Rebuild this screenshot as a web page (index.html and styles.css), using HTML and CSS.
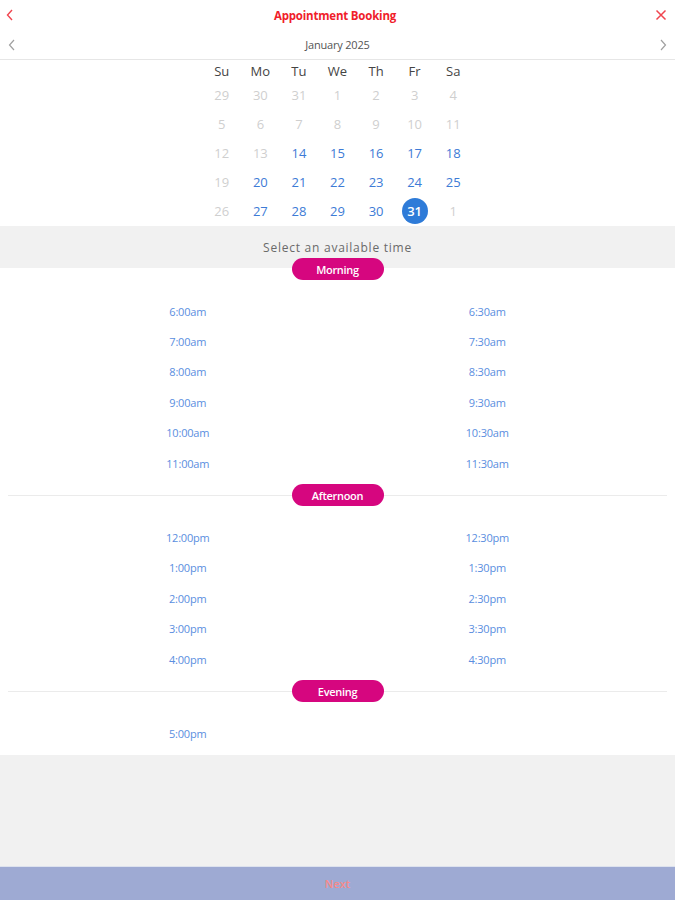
FILE: index.html
```html
<!DOCTYPE html>
<html>
<head>
<meta charset="utf-8">
<link rel="stylesheet" href="styles.css">
</head>
<body>
<div class="app">
  <header class="topbar">
    <svg class="icon back" width="10" height="14" viewBox="0 0 10 14"><path d="M7 2 L2.5 7 L7 12" fill="none" stroke="#f0454f" stroke-width="1.4"/></svg>
    <div class="title">Appointment Booking</div>
    <svg class="icon close" width="12" height="12" viewBox="0 0 12 12"><path d="M1.5 1.5 L10.5 10.5 M10.5 1.5 L1.5 10.5" fill="none" stroke="#f0454f" stroke-width="1.5"/></svg>
  </header>
  <div class="monthbar">
    <svg class="icon" width="10" height="14" viewBox="0 0 10 14"><path d="M7 2 L2.5 7 L7 12" fill="none" stroke="#a0a0a0" stroke-width="1.2"/></svg>
    <div class="month">January 2025</div>
    <svg class="icon" width="10" height="14" viewBox="0 0 10 14"><path d="M3 2 L7.5 7 L3 12" fill="none" stroke="#a0a0a0" stroke-width="1.2"/></svg>
  </div>
  <div class="calendar">
    <div class="dow">Su</div><div class="dow">Mo</div><div class="dow">Tu</div><div class="dow">We</div><div class="dow">Th</div><div class="dow">Fr</div><div class="dow">Sa</div>
    <div class="day off">29</div><div class="day off">30</div><div class="day off">31</div><div class="day off">1</div><div class="day off">2</div><div class="day off">3</div><div class="day off">4</div>
    <div class="day off">5</div><div class="day off">6</div><div class="day off">7</div><div class="day off">8</div><div class="day off">9</div><div class="day off">10</div><div class="day off">11</div>
    <div class="day off">12</div><div class="day off">13</div><div class="day on">14</div><div class="day on">15</div><div class="day on">16</div><div class="day on">17</div><div class="day on">18</div>
    <div class="day off">19</div><div class="day on">20</div><div class="day on">21</div><div class="day on">22</div><div class="day on">23</div><div class="day on">24</div><div class="day on">25</div>
    <div class="day off">26</div><div class="day on">27</div><div class="day on">28</div><div class="day on">29</div><div class="day on">30</div><div class="day sel"><span>31</span></div><div class="day off">1</div>
  </div>
  <div class="band">Select an available time</div>
  <section class="period first">
    <div class="phead"><span class="pill">Morning</span></div>
    <div class="slots">
      <div class="slot">6:00am</div><div class="slot">6:30am</div>
      <div class="slot">7:00am</div><div class="slot">7:30am</div>
      <div class="slot">8:00am</div><div class="slot">8:30am</div>
      <div class="slot">9:00am</div><div class="slot">9:30am</div>
      <div class="slot">10:00am</div><div class="slot">10:30am</div>
      <div class="slot">11:00am</div><div class="slot">11:30am</div>
    </div>
  </section>
  <section class="period">
    <div class="phead line"><span class="pill">Afternoon</span></div>
    <div class="slots">
      <div class="slot">12:00pm</div><div class="slot">12:30pm</div>
      <div class="slot">1:00pm</div><div class="slot">1:30pm</div>
      <div class="slot">2:00pm</div><div class="slot">2:30pm</div>
      <div class="slot">3:00pm</div><div class="slot">3:30pm</div>
      <div class="slot">4:00pm</div><div class="slot">4:30pm</div>
    </div>
  </section>
  <section class="period">
    <div class="phead line"><span class="pill">Evening</span></div>
    <div class="slots">
      <div class="slot">5:00pm</div>
    </div>
  </section>
  <div class="filler"></div>
  <footer class="next">Next</footer>
</div>
</body>
</html>
```
FILE: styles.css
```css
* { box-sizing: border-box; }
html, body { margin: 0; padding: 0; }
body {
  font-family: "Open Sans", "Noto Sans", sans-serif;
  background: #fff;
}
.app {
  height: 900px;
  display: flex;
  flex-direction: column;
}
.topbar {
  height: 30px;
  display: flex;
  align-items: center;
  justify-content: space-between;
  padding: 0 8px 0 5px;
}
.title {
  color: #f0202a;
  font-weight: 700;
  font-size: 11.5px;
  letter-spacing: -0.2px;
}
.icon { display: block; }
.monthbar {
  height: 30px;
  display: flex;
  align-items: center;
  justify-content: space-between;
  padding: 0 7px;
  border-bottom: 1px solid #e6e6e6;
}
.month {
  font-size: 11px;
  color: #555;
  letter-spacing: -0.2px;
}
.calendar {
  align-self: center;
  width: 270px;
  display: grid;
  grid-template-columns: repeat(7, 1fr);
  grid-template-rows: 20px repeat(5, 29px);
  margin-bottom: 1px;
}
.dow {
  display: flex;
  align-items: flex-end;
  justify-content: center;
  font-size: 13px;
  color: #444;
  line-height: 18px;
}
.day {
  display: flex;
  align-items: center;
  justify-content: center;
  font-size: 13px;
}
.day.off { color: #cfcfcf; }
.day.on { color: #3d7bd6; }
.day.sel span {
  width: 26px;
  height: 26px;
  border-radius: 50%;
  background: #2e7bd8;
  color: #fff;
  display: flex;
  align-items: center;
  justify-content: center;
  font-weight: 600;
}
.band {
  background: #f1f1f1;
  height: 42px;
  display: flex;
  align-items: center;
  justify-content: center;
  font-size: 12px;
  color: #6a6a6a;
  letter-spacing: 0.75px;
}
.period {
  background: #fff;
  padding-bottom: 6px;
}
.period.first { margin-top: -10px; background: transparent; }
.period.first .slots { background: #fff; }
.phead {
  height: 22px;
  display: flex;
  justify-content: center;
  align-items: center;
  position: relative;
  margin: 0 8px;
}
.phead.line::before {
  content: "";
  position: absolute;
  left: 0;
  right: 0;
  top: 11px;
  border-top: 1px solid #ebebeb;
}
.pill {
  position: relative;
  width: 92px;
  height: 22px;
  border-radius: 11px;
  background: #d6067f;
  color: #fff;
  font-size: 11px;
  font-weight: 600;
  display: flex;
  align-items: center;
  justify-content: center;
  letter-spacing: -0.3px;
}
.slots {
  display: grid;
  grid-template-columns: 1fr 1fr;
  grid-auto-rows: 30.4px;
  padding: 16px 38px 0;
}
.first { padding-bottom: 0; }
.first .slots { padding-bottom: 6px; }
.slot {
  display: flex;
  align-items: center;
  justify-content: center;
  font-size: 11px;
  color: #5a8ee0;
  letter-spacing: -0.2px;
}
.filler {
  flex: 1;
  background: #f1f1f1;
}
.next {
  height: 34px;
  background: #9eaad3;
  border-top: 1px solid #dde2ee;
  display: flex;
  align-items: center;
  justify-content: center;
  color: #f58a8a;
  font-size: 11px;
  font-weight: 600;
}
```
